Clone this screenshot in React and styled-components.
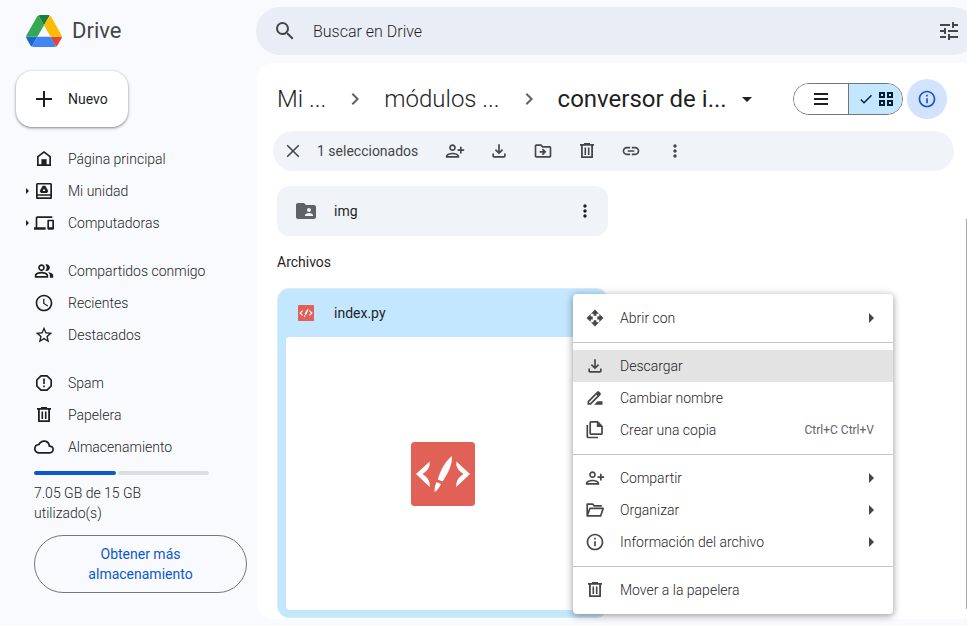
import React from 'react';
import styled, { createGlobalStyle } from 'styled-components';
import {
  MdSearch, MdTune, MdDevices, MdOutlinePeopleAlt, MdAccessTime, MdStarBorder, MdCloudQueue,
  MdOutlinePersonAddAlt1, MdOutlineDriveFileMove, MdLink, MdMoreVert, MdInfoOutline,
  MdFolderShared, MdDriveFileRenameOutline, MdCheck,
} from 'react-icons/md';

const GlobalStyle = createGlobalStyle`
  *, *::before, *::after { box-sizing: border-box; }
  body { margin: 0; background: #f8fafd; overflow: hidden; color: #1f1f1f; font: 400 14px/20px Roboto, "Liberation Sans", sans-serif; }
  button, input { font: inherit; color: inherit; }
  button { border: 0; padding: 0; background: none; cursor: pointer; }
  h1, h2, p, ul, ol { margin: 0; padding: 0; font-weight: 400; }
  ul, ol { list-style: none; }
  a { color: inherit; text-decoration: none; }
  svg { display: block; flex: none; }
`;

const Page = styled.div`
  display: grid;
  grid-template-columns: 256px minmax(0, 1fr);
  min-height: 100vh;
  overflow: hidden;
`;
const Sidebar = styled.aside`
  display: flex;
  flex-direction: column;
`;
const Brand = styled.a`
  display: flex;
  align-items: center;
  gap: 10px;
  height: 62px;
  padding-left: 26px;
  font-size: 22px;
  line-height: 28px;
  color: #444746;
`;
const NewButton = styled.button`
  display: flex;
  align-items: center;
  gap: 14px;
  align-self: flex-start;
  height: 56px;
  margin: 9px 0 16px 16px;
  padding: 0 20px 0 18px;
  border-radius: 16px;
  background: #fff;
  box-shadow: 0 1px 2px rgba(60, 64, 67, .45), 0 1px 3px 1px rgba(60, 64, 67, .18);
`;
const NavList = styled.ul`
  margin-bottom: 16px;
  font-weight: 300;
  &:last-of-type { margin-bottom: 0; }
`;
const NavLink = styled.a`
  display: grid;
  grid-template-columns: 8px 20px 1fr;
  align-items: center;
  height: 32px;
  padding-left: 26px;
  span { padding-left: 14px; }
`;
const Caret = styled.i`
  width: 0;
  height: 0;
  border: ${p => p.$size}px solid transparent;
  border-left-color: ${p => p.$color || '#1f1f1f'};
  border-right: 0;
`;
const Storage = styled.section`
  display: flex;
  flex-direction: column;
  padding: 8px 9px 0 34px;
  color: #444746;
  p { width: 140px; margin: 8px 0 12px; font-weight: 300; color: #1f1f1f; }
`;
const Meter = styled.div`
  display: flex;
  gap: 2px;
  width: 175px;
  height: 4px;
`;
const MeterPart = styled.i`
  flex: ${p => p.$grow};
  border-radius: 2px;
  background: ${p => (p.$used ? '#0b57d0' : '#dcdddf')};
`;
const MoreStorage = styled.button`
  height: 58px;
  padding: 0 40px;
  border: 1px solid #747775;
  border-radius: 29px;
  color: #0b57d0;
`;

const Main = styled.main`
  display: flex;
  flex-direction: column;
  margin-right: -10px;
  padding: 7px 0;
`;
const Search = styled.form`
  display: flex;
  align-items: center;
  gap: 8px;
  height: 48px;
  padding: 0 8px 0 9px;
  border-radius: 24px;
  background: #e9eef6;
  color: #444746;
  input {
    flex: 1;
    min-width: 0;
    padding: 2px 0 0;
    border: 0;
    background: none;
    outline: 0;
    font-size: 16px;
    font-weight: 300;
  }
  input::placeholder { color: #1f1f1f; opacity: 1; }
`;
const IconButton = styled.button`
  display: grid;
  place-items: center;
  width: 40px;
  height: 40px;
  border-radius: 50%;
  color: ${p => p.$color || '#444746'};
  background: ${p => p.$bg || 'none'};
`;
const Panel = styled.section`
  flex: 1;
  margin: 8px 0 0 1px;
  padding: 14px 23px 0 16px;
  border-radius: 16px;
  background: #fff;
`;
const TitleRow = styled.header`
  display: flex;
  align-items: center;
  height: 44px;
  padding: 0 7px 0 4px;
`;
const Crumbs = styled.ol`
  display: flex;
  align-items: center;
  flex: 1;
  font-size: 24px;
  line-height: 32px;
  font-weight: 300;
  color: #1f1f1f;
  li { display: flex; align-items: center; }
`;
const CrumbArrow = styled.svg`
  margin: 0 17px;
`;
const Current = styled.button`
  display: flex;
  align-items: center;
  gap: 15px;
  font-weight: 400;
`;
const DownCaret = styled.i`
  border: 5px solid transparent;
  border-top-color: #1f1f1f;
  border-bottom: 0;
`;
const ViewToggle = styled.div`
  display: flex;
  height: 32px;
  margin-right: 4px;
  border: 1px solid #747775;
  border-radius: 16px;
  overflow: hidden;
`;
const ViewButton = styled.button`
  display: flex;
  align-items: center;
  justify-content: center;
  gap: 4px;
  width: 54px;
  background: ${p => (p.$on ? '#c2e7ff' : '#fff')};
  color: ${p => (p.$on ? '#001d35' : '#1f1f1f')};
  & + & { border-left: 1px solid #747775; }
`;
const ActionBar = styled.div`
  display: flex;
  align-items: center;
  gap: 4px;
  height: 40px;
  margin-top: 10px;
  border-radius: 20px;
  background: #f0f4f9;
  color: #444746;
`;
const Count = styled.span`
  width: 114px;
`;
const Cards = styled.div`
  padding: 15px 0 0 4px;
`;
const Card = styled.article`
  width: 331px;
  border-radius: 12px;
  background: ${p => (p.$selected ? '#c2e7ff' : '#f0f4f9')};
  border: 1px solid ${p => (p.$selected ? '#d9ecfa' : '#f0f4f9')};
  padding: ${p => (p.$selected ? '0 8px 7px' : '0 2px')};
`;
const CardHead = styled.div`
  display: flex;
  align-items: center;
  height: 48px;
  padding-left: ${p => p.$inset}px;
  span { flex: 1; padding-left: ${p => p.$gap}px; }
`;
const SectionTitle = styled.h2`
  margin: 16px 0;
  font-size: 14px;
  line-height: 20px;
`;
const Preview = styled.div`
  display: grid;
  place-items: center;
  height: 273px;
  border-radius: 4px;
  background: #fff;
`;
const ScrollThumb = styled.i`
  position: absolute;
  right: 0;
  top: 219px;
  width: 1px;
  height: 390px;
  background: #a8a8a8;
`;

const Menu = styled.div`
  position: absolute;
  left: 573px;
  top: 294px;
  width: 320px;
  padding: 8px 0;
  border-radius: 4px;
  background: #fff;
  color: #444746;
  box-shadow: 0 2px 6px rgba(0, 0, 0, .28), 0 1px 10px 1px rgba(0, 0, 0, .14);
  hr { margin: 8px 0 7px; border: 0; height: 1px; background: #c4c7c5; }
`;
const MenuItem = styled.button`
  display: flex;
  align-items: center;
  width: 100%;
  height: 32px;
  padding: 0 19px 0 12px;
  text-align: left;
  background: ${p => (p.$active ? '#e3e3e3' : 'none')};
  span { flex: 1; padding-left: 15px; font-weight: 300; color: #1f1f1f; }
  kbd { font: 400 12px/16px Roboto, sans-serif; color: #5f6368; }
`;

const Glyph = ({ size = 20, box = 20, children }) => (
  <svg width={size} height={size} viewBox={`0 0 ${box} ${box}`} fill="currentColor" aria-hidden="true">{children}</svg>
);
const DriveLogo = () => (
  <svg width="36" height="32" viewBox="0 0 87.3 78" aria-hidden="true">
    <path d="m6.6 66.85 3.85 6.65c.8 1.4 1.95 2.5 3.3 3.3l13.75-23.8h-27.5c0 1.55.4 3.1 1.2 4.5z" fill="#1967d2" />
    <path d="m43.65 25-13.75-23.8c-1.35.8-2.5 1.9-3.3 3.3l-25.4 44a9.06 9.06 0 0 0 -1.2 4.5h27.5z" fill="#34a853" />
    <path d="m73.55 76.8c1.35-.8 2.5-1.9 3.3-3.3l1.6-2.75 7.65-13.25c.8-1.4 1.2-2.95 1.2-4.5h-27.5l5.85 11.5z" fill="#ea4335" />
    <path d="m43.65 25 13.75-23.8c-1.35-.8-2.9-1.2-4.5-1.2h-18.5c-1.6 0-3.15.45-4.5 1.2z" fill="#188038" />
    <path d="m59.8 53h-32.3l-13.75 23.8c1.35.8 2.9 1.2 4.5 1.2h50.8c1.6 0 3.15-.45 4.5-1.2z" fill="#4285f4" />
    <path d="m73.4 26.5-12.7-22c-.8-1.4-1.95-2.5-3.3-3.3l-13.75 23.8 16.15 28h27.45c0-1.55-.4-3.1-1.2-4.5z" fill="#fbbc04" />
  </svg>
);
const PlusIcon = () => <Glyph><path d="M9 2h2v7h7v2h-7v7H9v-7H2V9h7z" /></Glyph>;
const HomeIcon = () => (
  <Glyph><path fillRule="evenodd" d="M10 2l7 5.3V17H3V7.3zM10 4L4.7 8v7.3h10.6V8z" /><path d="M7.4 10.2h5.2V16H7.4z" /></Glyph>
);
const UnitIcon = () => (
  <Glyph>
    <path fillRule="evenodd" d="M3.6 2h12.8c.9 0 1.6.7 1.6 1.6v12.8c0 .9-.7 1.6-1.6 1.6H3.6C2.7 18 2 17.3 2 16.4V3.6C2 2.7 2.7 2 3.6 2zM3.7 3.6v9.6h12.6V3.6zM3.7 14.7v1.6h12.6v-1.6z" />
    <path fillRule="evenodd" d="M8.7 4.8h2.600l3 5.200-1.300 2H7l-1.300-2zM10 7.600l-1.300 2.300h2.600z" />
  </Glyph>
);
const SpamIcon = () => (
  <Glyph>
    <path d="M7 2.8h6L17.2 7v6L13 17.2H7L2.8 13V7z" fill="none" stroke="currentColor" strokeWidth="1.7" strokeLinejoin="round" />
    <path d="M9.2 5.5h1.6V11H9.2zM9.2 12.5h1.6v1.700H9.2z" />
  </Glyph>
);
const TrashIcon = () => (
  <Glyph>
    <path d="M3 3h4V2h6v1h4v1.7H3z" />
    <path d="M4.9 4v12.2h10.2V4" fill="none" stroke="currentColor" strokeWidth="1.8" strokeLinejoin="round" />
    <path d="M7.5 6.5h1.6V14H7.5zM10.9 6.5h1.6V14h-1.6z" />
  </Glyph>
);
const DownloadIcon = () => (
  <Glyph box={24}><path d="M12 16l-5-5 1.4-1.45 2.6 2.6V4h2v8.15l2.6-2.6L17 11zM6 20q-.825 0-1.413-.587T4 18v-3h2v3h12v-3h2v3q0 .825-.587 1.413T18 20z" /></Glyph>
);
const CopyIcon = () => (
  <Glyph>
    <path d="M6.200 1.900h6.300L17 6.400v6.800c0 .6-.4 1-1 1H6.200c-.6 0-1-.4-1-1V2.900c0-.6.400-1 1-1z" fill="none" stroke="currentColor" strokeWidth="1.700" />
    <path d="M11.800 1.900v5.200H17z" />
    <path d="M2.300 5v11.500c0 .6.400 1 1 1H13" fill="none" stroke="currentColor" strokeWidth="1.700" />
  </Glyph>
);
const CloseIcon = () => (
  <Glyph><path d="M4.2 4.2l11.6 11.6M15.8 4.2L4.2 15.8" stroke="currentColor" strokeWidth="1.6" /></Glyph>
);
const ListIcon = () => <Glyph><path d="M3 4h14v2H3zM3 9h14v2H3zM3 14h14v2H3z" /></Glyph>;
const GridIcon = () => (
  <Glyph size={16} box={16}>
    <path d="M2 2h4v4H2zM10 2h4v4h-4zM2 10h4v4H2zM10 10h4v4h-4z" fill="none" stroke="currentColor" strokeWidth="2" />
  </Glyph>
);
const OpenWithIcon = () => (
  <Glyph>
    <path d="M10 1.5l4 4.200h-2.600v2H8.600v-2H6zM10 18.500l4-4.200h-2.600v-2H8.600v2H6zM1.500 10l4.200-4v2.600h2v2.800h-2V14zM18.500 10l-4.200-4v2.600h-2v2.800h2V14z" />
  </Glyph>
);
const FolderOpenIcon = () => (
  <Glyph>
    <path d="M2.2 15.8V4.2h5.6l1.5 1.7h7.5M2.2 15.800L5 8.300h13.200l-2.500 7.500z" fill="none" stroke="currentColor" strokeWidth="1.7" strokeLinejoin="round" />
  </Glyph>
);
const CodeFileIcon = ({ size }) => (
  <svg width={size} height={size} viewBox="0 0 64 64" aria-hidden="true">
    <rect width="64" height="64" rx="3.5" fill="#e16156" />
    <g fill="#fff">
      <path d="M18.7 19.5L5 32l13.7 13v-3.5c-.7-4-3.4-7.200-7.200-9.500 3.800-2.300 6.500-5.500 7.200-9z" />
      <path d="M45.300 19.500L59 32 45.300 45v-3.500c.7-4 3.400-7.200 7.200-9.500-3.800-2.300-6.500-5.500-7.200-9z" />
      <path d="M41 14c-6 4.500-11.500 13.500-14.200 23.500l4.800 2C36.500 32 41.500 23 41 14z" />
      <path d="M25.600 40l4.400 2c-1.500 3.500-3.500 6-6.500 8 0-3.500.6-7 2.100-10z" />
    </g>
  </svg>
);

const NAV = [
  [
    { label: 'Página principal', icon: <HomeIcon /> },
    { label: 'Mi unidad', icon: <UnitIcon />, expandable: true },
    { label: 'Computadoras', icon: <MdDevices size={20} />, expandable: true },
  ],
  [
    { label: 'Compartidos conmigo', icon: <MdOutlinePeopleAlt size={20} /> },
    { label: 'Recientes', icon: <MdAccessTime size={20} /> },
    { label: 'Destacados', icon: <MdStarBorder size={20} /> },
  ],
  [
    { label: 'Spam', icon: <SpamIcon /> },
    { label: 'Papelera', icon: <TrashIcon /> },
    { label: 'Almacenamiento', icon: <MdCloudQueue size={20} /> },
  ],
];

const ACTIONS = [
  { label: 'Compartir', icon: <MdOutlinePersonAddAlt1 size={20} /> },
  { label: 'Descargar', icon: <DownloadIcon /> },
  { label: 'Mover', icon: <MdOutlineDriveFileMove size={20} /> },
  { label: 'Mover a la papelera', icon: <TrashIcon /> },
  { label: 'Copiar vínculo', icon: <MdLink size={20} /> },
  { label: 'Más acciones', icon: <MdMoreVert size={20} /> },
];

const MENU = [
  [{ label: 'Abrir con', icon: <OpenWithIcon />, submenu: true }],
  [
    { label: 'Descargar', icon: <DownloadIcon />, active: true },
    { label: 'Cambiar nombre', icon: <MdDriveFileRenameOutline size={20} /> },
    { label: 'Crear una copia', icon: <CopyIcon />, keys: 'Ctrl+C Ctrl+V' },
  ],
  [
    { label: 'Compartir', icon: <MdOutlinePersonAddAlt1 size={20} />, submenu: true },
    { label: 'Organizar', icon: <FolderOpenIcon />, submenu: true },
    { label: 'Información del archivo', icon: <MdInfoOutline size={20} />, submenu: true },
  ],
  [{ label: 'Mover a la papelera', icon: <TrashIcon /> }],
];

const Separator = () => (
  <CrumbArrow width="24" height="24" viewBox="0 0 24 24" aria-hidden="true">
    <path d="M9.3 6.7L14.6 12l-5.3 5.3" fill="none" stroke="#5f6368" strokeWidth="2" />
  </CrumbArrow>
);

export default function App() {
  return (
    <>
      <GlobalStyle />
      <Page>
        <Sidebar>
          <Brand href="#"><DriveLogo />Drive</Brand>
          <NewButton><PlusIcon />Nuevo</NewButton>
          <nav>
            {NAV.map((group, i) => (
              <NavList key={i}>
                {group.map(item => (
                  <li key={item.label}>
                    <NavLink href="#">
                      {item.expandable ? <Caret $size={3} /> : <i />}
                      {item.icon}
                      <span>{item.label}</span>
                    </NavLink>
                  </li>
                ))}
              </NavList>
            ))}
          </nav>
          <Storage>
            <Meter role="img" aria-label="7.05 GB de 15 GB"><MeterPart $grow={82} $used /><MeterPart $grow={91} /></Meter>
            <p>7.05 GB de 15 GB utilizado(s)</p>
            <MoreStorage>Obtener más almacenamiento</MoreStorage>
          </Storage>
        </Sidebar>
        <Main>
          <Search role="search">
            <IconButton type="button" aria-label="Buscar"><MdSearch size={24} /></IconButton>
            <input type="text" placeholder="Buscar en Drive" aria-label="Buscar en Drive" />
            <IconButton type="button" aria-label="Opciones de búsqueda"><MdTune size={24} /></IconButton>
          </Search>
          <Panel>
            <TitleRow>
              <Crumbs>
                <li><a href="#">Mi ...</a><Separator /></li>
                <li><a href="#">módulos ...</a><Separator /></li>
                <li><Current>conversor de i...<DownCaret /></Current></li>
              </Crumbs>
              <ViewToggle>
                <ViewButton aria-label="Lista"><ListIcon /></ViewButton>
                <ViewButton $on aria-label="Cuadrícula"><MdCheck size={16} /><GridIcon /></ViewButton>
              </ViewToggle>
              <IconButton aria-label="Detalles" $color="#0b57d0" $bg="#d3e3fd"><MdInfoOutline size={20} /></IconButton>
            </TitleRow>
            <ActionBar>
              <IconButton aria-label="Cerrar"><CloseIcon /></IconButton>
              <Count>1 seleccionados</Count>
              {ACTIONS.map(a => <IconButton key={a.label} aria-label={a.label}>{a.icon}</IconButton>)}
            </ActionBar>
            <Cards>
              <Card>
                <CardHead $inset={14} $gap={16}>
                  <MdFolderShared size={24} color="#5f6368" />
                  <span>img</span>
                  <IconButton aria-label="Más acciones para img" $color="#1f1f1f"><MdMoreVert size={20} /></IconButton>
                </CardHead>
              </Card>
              <SectionTitle>Archivos</SectionTitle>
              <Card $selected>
                <CardHead $inset={12} $gap={20}>
                  <CodeFileIcon size={16} />
                  <span>index.py</span>
                </CardHead>
                <Preview><CodeFileIcon size={64} /></Preview>
              </Card>
            </Cards>
          </Panel>
        </Main>
      </Page>
      <ScrollThumb />
      <Menu role="menu">
        {MENU.map((group, i) => (
          <React.Fragment key={i}>
            {i > 0 && <hr />}
            {group.map(item => (
              <MenuItem key={item.label} role="menuitem" $active={item.active}>
                {item.icon}
                <span>{item.label}</span>
                {item.keys && <kbd>{item.keys}</kbd>}
                {item.submenu && <Caret $size={5} $color="#444746" />}
              </MenuItem>
            ))}
          </React.Fragment>
        ))}
      </Menu>
    </>
  );
}
